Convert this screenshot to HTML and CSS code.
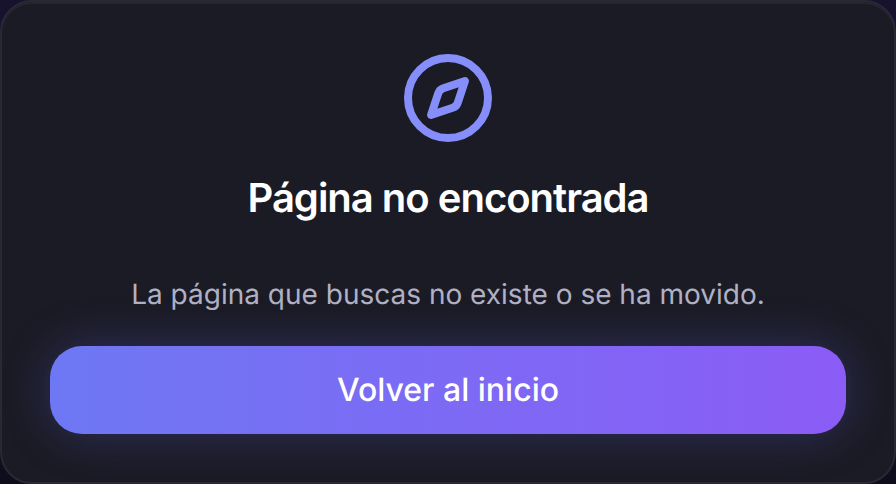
FILE: index.html
```
<!DOCTYPE html>
<html lang="es">
<head>
<meta charset="utf-8">
<meta name="viewport" content="width=device-width, initial-scale=1">
<title>Página no encontrada</title>
<link rel="stylesheet" href="styles.css">
</head>
<body>
<main class="card">
  <svg class="icon" viewBox="0 0 24 24" aria-hidden="true">
    <circle cx="12" cy="12" r="10"/>
    <path d="m16.24 7.76-1.804 5.411a2 2 0 0 1-1.265 1.265L7.76 16.24l1.804-5.411a2 2 0 0 1 1.265-1.265z"/>
  </svg>
  <h1 class="title">Página no encontrada</h1>
  <p class="message">La página que buscas no existe o se ha movido.</p>
  <a class="button" href="/">Volver al inicio</a>
</main>
</body>
</html>
```
FILE: styles.css
```
* {
  box-sizing: border-box;
}

body {
  margin: 0;
  background: linear-gradient(#17132f, #0f0d1c);
  color: #fff;
  font-family: Inter, sans-serif;
  text-rendering: geometricPrecision;
}

.card {
  display: flex;
  flex-direction: column;
  align-items: center;
  min-height: 100vh;
  padding: 48px;
  border: 2px solid #292933;
  border-radius: 32px;
  background: #1b1b25;
  box-shadow: inset 0 2px 0 #252530;
  text-align: center;
}

.icon {
  width: 96px;
  height: 96px;
  fill: none;
  stroke: #868efb;
  stroke-width: 2;
  stroke-linecap: round;
  stroke-linejoin: round;
}

.title {
  margin: 24px 0 48px;
  font-size: 40px;
  font-weight: 600;
  line-height: 56px;
  letter-spacing: -1px;
}

.message {
  margin: 0 0 32px;
  color: #b0b1c4;
  font-size: 28px;
  line-height: 40px;
}

.button {
  align-self: stretch;
  padding: 20px 32px;
  border-radius: 32px;
  background: linear-gradient(90deg, #6e78f3, #8b5cf6);
  box-shadow: 0 0 48px rgba(99, 102, 241, 0.28);
  color: #fff;
  font-size: 32px;
  font-weight: 500;
  line-height: 48px;
  text-decoration: none;
}
```
